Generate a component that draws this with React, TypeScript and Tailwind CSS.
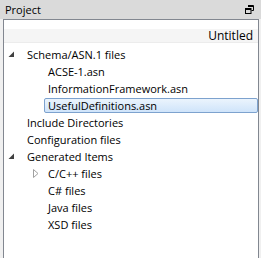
import React from 'react'

type Item = { label: string; depth: number; arrow?: 'open' | 'closed'; selected?: boolean }

const items: Item[] = [
  { label: 'Schema/ASN.1 files', depth: 0, arrow: 'open' },
  { label: 'ACSE-1.asn', depth: 1 },
  { label: 'InformationFramework.asn', depth: 1 },
  { label: 'UsefulDefinitions.asn', depth: 1, selected: true },
  { label: 'Include Directories', depth: 0 },
  { label: 'Configuration files', depth: 0 },
  { label: 'Generated Items', depth: 0, arrow: 'open' },
  { label: 'C/C++ files', depth: 1, arrow: 'closed' },
  { label: 'C# files', depth: 1 },
  { label: 'Java files', depth: 1 },
  { label: 'XSD files', depth: 1 },
]

function Arrow({ kind }: { kind: 'open' | 'closed' }) {
  if (kind === 'open') {
    return (
      <svg width="7" height="7" viewBox="0 0 7 7" className="block">
        <path d="M6 0.5 L6 6 L0.5 6 Z" fill="#404040" />
      </svg>
    )
  }
  return (
    <svg width="6" height="9" viewBox="0 0 6 9" className="block">
      <path d="M0.5 0.5 L5 4.5 L0.5 8.5 Z" fill="none" stroke="#a0a0a0" strokeWidth="1" />
    </svg>
  )
}

function FloatIcon() {
  return (
    <svg width="9" height="9" viewBox="0 0 9 9" className="block">
      <path d="M3 0.5 H8.5 V5.5 H6.5" fill="none" stroke="#000" strokeWidth="1" />
      <path d="M3 1.5 H8.5" stroke="#000" strokeWidth="1" />
      <rect x="0.5" y="3.5" width="5.5" height="5" fill="none" stroke="#000" strokeWidth="1" />
      <path d="M0.5 4.5 H6" stroke="#000" strokeWidth="1" />
    </svg>
  )
}

export default function App() {
  return (
    <div
      className="w-[261px] h-[258px] bg-[#f0f0f0] flex flex-col text-[11px] text-black overflow-hidden"
      style={{ fontFamily: '"Open Sans", "Noto Sans", sans-serif' }}
    >
      <div className="h-[19px] bg-[#dadada] flex items-center justify-between pl-[5px] pr-[7px]">
        <span className="leading-none">Project</span>
        <FloatIcon />
      </div>
      <div className="flex-1 ml-[3px] mr-[2px] border-l border-r border-t border-[#828790] bg-white flex flex-col">
        <div className="h-[9px]" />
        <div className="h-[14px] bg-[#f5f5f5] border-b border-[#ececec] flex items-center justify-end pr-[5px] text-[12px]">
          <span className="leading-none">Untitled</span>
        </div>
        <div className="flex flex-col pt-[3px]">
          {items.map((it) => (
            <div key={it.label} className="h-[17px] flex items-center">
              <div className={it.depth === 0 ? 'w-[19px] flex justify-end pr-[8px]' : 'w-[40px] flex justify-end pr-[5px]'}>
                {it.arrow ? <Arrow kind={it.arrow} /> : null}
              </div>
              <div
                className={
                  it.selected
                    ? 'flex-1 h-[15px] flex items-center pl-[3px] rounded-[2px] border border-[#7da2ce] bg-gradient-to-b from-[#ebf4fd] to-[#cfe4fa]'
                    : 'flex-1 h-[15px] flex items-center pl-[4px]'
                }
              >
                <span className="leading-none whitespace-nowrap">{it.label}</span>
              </div>
            </div>
          ))}
        </div>
      </div>
    </div>
  )
}
